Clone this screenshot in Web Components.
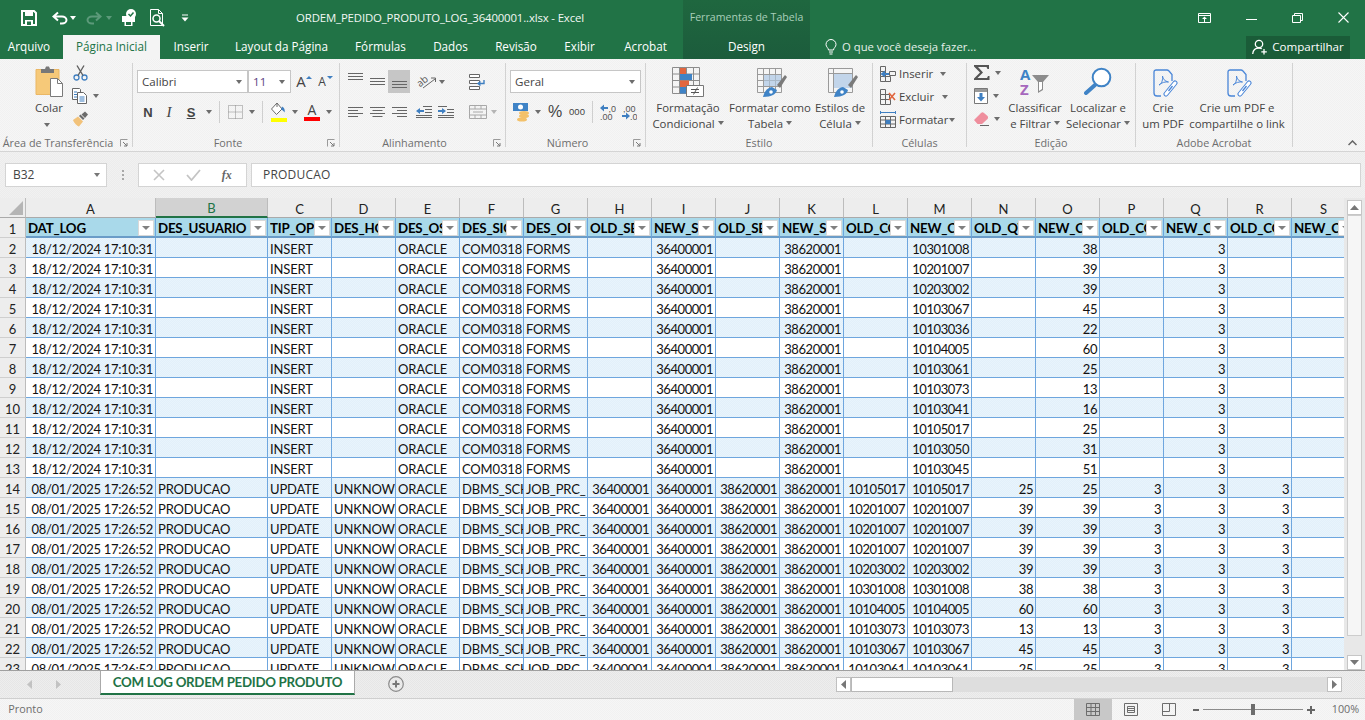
<!DOCTYPE html>
<html lang="pt-BR">
<head>
<meta charset="utf-8">
<title>ORDEM_PEDIDO_PRODUTO_LOG_36400001..xlsx - Excel</title>
<style>
html, body { margin: 0; padding: 0; height: 720px; width: 1365px; overflow: hidden; background: #eee; }
body { display: flex; flex-direction: column; font-family: "Open Sans", sans-serif; }
</style>
</head>
<body>
<xl-header></xl-header>
<xl-ribbon></xl-ribbon>
<xl-formula></xl-formula>
<xl-sheet></xl-sheet>
<xl-tabs></xl-tabs>
<xl-status></xl-status>

<script>
const UI = '"Open Sans", sans-serif';
const GRAY = '#6d6d6d';
const BLUE = '#3f7fc1';

// name: [width, height, svg body]
const ICONS = {
  save: [16, 16, `<path d="M1 1h12l2 2v12H1z" fill="none" stroke="#fff" stroke-width="2"/><path d="M4 1h8v5H4z" fill="#fff"/><path d="M4 10h8v5H4z" fill="#fff"/><path d="M6 11.5h4v3.5H6z" fill="#217346"/>`],
  undo: [17, 14, `<path d="M7 1.5 2.5 5.5 7 9.5M3 5.5h8c2.5 0 4.5 1.500 4.500 3.500S13.5 12.500 11 12.500H9" fill="none" stroke="#fff" stroke-width="2"/>`],
  redo: [17, 14, `<path d="M10 1.500l4.500 4-4.500 4M14 5.500H6C3.500 5.500 1.500 7 1.500 9s2 3.500 4.500 3.500h2" fill="none" stroke="#5c9a7a" stroke-width="2"/>`],
  touch: [17, 18, `<path d="M2 7h13v6h-2.500v4h-8v-4H2z" fill="#fff"/><path d="M6 13h5v3H6z" fill="#217346"/><circle cx="11" cy="5" r="5" fill="#fff"/><path d="M8.500 5l2 2 3-3.500" fill="none" stroke="#217346" stroke-width="1.500"/>`],
  preview: [15, 18, `<path d="M.5.500h8l4 4v12H.500z" fill="none" stroke="#fff"/><path d="M8.500.500v4h4" fill="none" stroke="#fff"/><circle cx="6.500" cy="9.500" r="3.500" fill="none" stroke="#fff" stroke-width="1.500"/><path d="M9 12l5 5" stroke="#fff" stroke-width="2"/>`],
  custom: [8, 8, `<path d="M1 1h6" stroke="#fff"/><path d="M.5 3.500h7L4 7.500z" fill="#fff"/>`],
  display: [13, 10, `<path d="M.5.500h12v9H.500z M.5 2.500h12" fill="none" stroke="#fff"/><path d="M6.500 3.500 4 6h2v3h1V6h2z" fill="#fff"/>`],
  minimize: [11, 1, `<path d="M0 .5h11" stroke="#fff"/>`],
  restore: [11, 10, `<path d="M.5 2.500h8v7h-8z M2.500 2.500v-2h8v7h-2" fill="none" stroke="#fff"/>`],
  close: [11, 11, `<path d="M.5.500l10 10M10.500.500l-10 10" stroke="#fff" stroke-width="1.100"/>`],
  person: [16, 16, `<circle cx="7" cy="5" r="3.700" fill="none" stroke="#fff" stroke-width="1.300"/><path d="M.7 15c.3-3.500 2.500-6 6.300-6 1.200 0 2 .3 2.800.7" fill="none" stroke="#fff" stroke-width="1.300"/><path d="M12 10v5.500M9.300 12.800h5.500" stroke="#fff" stroke-width="1.300"/>`],
  bulb: [12, 16, `<path d="M3.500 11c0-2-2.500-3-2.500-5.500a5 5 0 0 1 10 0C11 8 8.500 9 8.500 11z" fill="none" stroke="#fff"/><path d="M4 13h4M4.500 15h3" stroke="#fff"/>`],
  paste: [30, 32, `<path d="M1 3.500h23v25H1z" fill="#f6c979" stroke="#eab765"/><path d="M6 3h4l1-2.500h3L15 3h4v4H6z" fill="#787878"/><path d="M15.500 12.500h7l5 5v13h-12z" fill="#fff" stroke="#7a7a7a"/><path d="M22.500 12.500v5h5" fill="none" stroke="#7a7a7a"/>`],
  scissors: [15, 16, `<circle cx="3.500" cy="12.500" r="2.500" fill="none" stroke="${BLUE}" stroke-width="1.300"/><circle cx="11.500" cy="12.500" r="2.500" fill="none" stroke="${BLUE}" stroke-width="1.300"/><path d="M5 10.500 11 .5M10 10.500 4 .5" stroke="#606060" stroke-width="1.400"/>`],
  copy: [16, 16, `<path d="M.5.500h7l1 1v10h-8z" fill="#fff" stroke="#666"/><path d="M5.500 4.500h6l3 3v8h-9z" fill="#fff" stroke="#666"/><path d="M2 4h3M2 6.500h3M2 9h3M7.500 9h5M7.500 11h5M7.500 13h5" stroke="${BLUE}"/>`],
  brush: [17, 16, `<path d="M1 9l5-3.500 5 5L7 15.500C5 15 2 12 1 9z" fill="#f2c27a"/><path d="M7 5l1.500-1.500 4 4L11 9z" fill="#6b6b6b"/><path d="M9.500 3.500 13 .5l3 3-3 3.500z" fill="#6b6b6b"/>`],
  borders: [15, 14, `<path d="M.5.500h14v13H.500z M7.500.5v13 M.5 7h14" fill="none" stroke="#8a8a8a" stroke-dasharray="1 1"/>`],
  fill: [17, 21, `<path d="M7 1 1.500 7l5 5.500L12 7z" fill="#fff" stroke="#6a6a6a"/><path d="M7 1V5" stroke="#6a6a6a"/><path d="M12 4.500c3 1.500 3 4.500 2.500 6-.8-1.500-1.800-2.500-3.500-3z" fill="${BLUE}"/><path d="M1 16h16v4H1z" fill="#ff0"/>`],
  align_t: [15, 8, `<path d="M0 .5h15M0 3.500h15M0 6.500h15" stroke="#666"/>`],
  align_m: [15, 8, `<path d="M0 .5h15M0 3.500h15M0 6.500h15" stroke="#666"/>`],
  align_b: [15, 8, `<path d="M0 .5h15M0 3.500h15M0 6.500h15" stroke="#666"/>`],
  orient: [20, 15, `<text x="1" y="11" font-family="Open Sans" font-size="10" fill="#555" transform="rotate(-40 6 8)">ab</text><path d="M7 14 19 5M15 4h4.500v4" fill="none" stroke="#666"/>`],
  left: [15, 11, `<path d="M0 .5h15M0 3.500h10M0 6.500h15M0 9.500h10" stroke="#666"/>`],
  center: [15, 11, `<path d="M0 .5h15M2.500 3.500h10M0 6.500h15M2.500 9.500h10" stroke="#666"/>`],
  right: [15, 11, `<path d="M0 .5h15M5 3.500h10M0 6.500h15M5 9.500h10" stroke="#666"/>`],
  indent_d: [16, 12, `<path d="M7 .5h9M9 3.500h7M9 6.500h7M0 9.500h16M0 11.500h16" stroke="#666"/><path d="M0 5l4-3v2h4v2H4v2z" fill="${BLUE}"/>`],
  indent_i: [16, 12, `<path d="M0 .5h9M9 3.500h7M9 6.500h7M0 9.500h16M0 11.500h16" stroke="#666"/><path d="M8 5 4 2v2H0v2h4v2z" fill="${BLUE}"/>`],
  wrap: [16, 16, `<path d="M.5.500h10v3h-10zM.5 6.500h10v3h-10zM.5 12.500h10v3h-10z" fill="#fff" stroke="#666"/><path d="M15 6v3.500H9M11.500 7.500 9 9.500l2.500 2" fill="none" stroke="${BLUE}" stroke-width="1.400"/>`],
  merge: [18, 14, `<path d="M.5.500h17v13H.500zM.5 4h17M.5 10h17M6 .5V4M12 .5V4M6 10v3.500M12 10v3.500" fill="none" stroke="#a8a8a8"/><path d="M4 7h10" stroke="#a8a8a8"/>`],
  currency: [18, 20, `<path d="M0 1h15v8H0z" fill="#3f83c6"/><circle cx="7.500" cy="5" r="2.500" fill="#fff"/><ellipse cx="11" cy="11" rx="5" ry="2" fill="#f3c16a"/><ellipse cx="11" cy="14" rx="5" ry="2" fill="#f3c16a"/><ellipse cx="9" cy="17.500" rx="5" ry="2" fill="#f3c16a"/>`],
  dec_i: [16, 16, `<path d="M0 4l4-3.500V3h4v2H4v2.500z" fill="${BLUE}"/><text x="8.500" y="7.500" font-family="Liberation Sans" font-size="9" fill="#555">,0</text><text x="0" y="16" font-family="Liberation Sans" font-size="9" fill="#555">,00</text>`],
  dec_d: [15, 16, `<text x="1" y="7.500" font-family="Liberation Sans" font-size="9" fill="#555">,00</text><path d="M8 12 4 8.500V11H0v2h4v2.500z" fill="${BLUE}"/><text x="8" y="16" font-family="Liberation Sans" font-size="9" fill="#555">,0</text>`],
  cond: [32, 30, `<path d="M.5.500h27v26H.500zM7.500.5v26M14.500.5v26M21.500.5v26M.5 7h27M.5 13.500h27M.5 20h27" fill="none" stroke="#8c8c8c"/><path d="M8 1h6v6H8z" fill="#e1663f"/><path d="M8 7h12v6H8z" fill="#3f83c6"/><path d="M8 13.500h9V20H8z" fill="#e1663f"/><path d="M8 20h6v6.500H8z" fill="#3f83c6"/><path d="M14.500 18.500h17v11h-17z" fill="#fff" stroke="#777"/><path d="M19 22.500h8M19 25.500h8M25.500 20.500l-4 7" stroke="#555"/>`],
  tablefmt: [30, 30, `<path d="M.5.500h24v24H.500zM6.500.5v24M12.500.5v24M18.500.5v24M.5 6.500h24M.5 12.500h24M.5 18.500h24" fill="#f5f5f5" stroke="#9a9a9a"/><path d="M7 7h17v11H7z" fill="#c2d5ea"/><path d="M7 12.500h17M12.500 7v11M18.500 7v11" stroke="#a8b8c8"/><path d="M20 17 28 7l2 2-7 11z" fill="#7a7a7a"/><path d="M6 29c1-4 3-9 9-10l5 3c-1 4-5 7-14 7z" fill="#3f83c6"/><circle cx="14" cy="24" r="1.800" fill="#fff"/>`],
  cellfmt: [30, 30, `<path d="M.5.500h24v24H.500z M.5 5.500h24M5.500.5v24" fill="#f5f5f5" stroke="#9a9a9a"/><path d="M6 6h18v14H6z" fill="#c2d5ea"/><path d="M20 17 28 7l2 2-7 11z" fill="#7a7a7a"/><path d="M6 29c1-4 3-9 9-10l5 3c-1 4-5 7-14 7z" fill="#3f83c6"/><circle cx="14" cy="24" r="1.800" fill="#fff"/>`],
  ins: [16, 16, `<path d="M.5 .5h5v5h-5zM.5 10.500h5v5h-5zM5.500 10.500h5v5h-5zM.5 5.500h5v5h-5zM9.500 5.500h6v4h-6z" fill="none" stroke="#666"/><path d="M.5 8 5 4.500V7h4v2H5v2.500z" fill="${BLUE}"/>`],
  del: [16, 16, `<path d="M.5 .5h5v5h-5zM.5 10.500h5v5h-5zM5.500 10.500h5v5h-5zM.5 5.500h5v5h-5zM5.500 5.500h4v5h-4z" fill="none" stroke="#666"/><path d="M9 4l6 7M15 4l-6 7" stroke="#e1663f" stroke-width="1.600"/>`],
  fmt: [16, 17, `<path d="M.5 1.500h15M.5 0v3M15.500 0v3" stroke="${BLUE}"/><path d="M.5 5.500h15v11H.500zM5.500 5.500v11M10.500 5.500v11M.5 9h15M.5 13h15" fill="none" stroke="#666"/><path d="M5.500 9h5v4h-5z" fill="${BLUE}"/>`],
  sigma: [16, 15, `<path d="M0 0h15v4h-1.500l-1-2H4l5 5.500L3.500 13H13l1-2h1.500v4H0v-1.500L6 7.500 0 1.500z" fill="#555"/>`],
  filldown: [14, 16, `<path d="M.5.500h13v15H.500z" fill="#fff" stroke="#777"/><path d="M1 1h12v3H1z" fill="#999"/><path d="M5.500 5h3v4h2.500L7 13.500 3 9h2.500z" fill="${BLUE}"/>`],
  eraser: [15, 14, `<path d="M0 8 7 1c1-1 2-1 3 0l3.500 3c.8.800.8 2 0 3L8 12H3.500z" fill="#ef8e9d"/><path d="M6 13.500h9" stroke="#666"/>`],
  sort: [30, 28, `<text x="0" y="13" font-family="Open Sans" font-weight="700" font-size="15" fill="#3f83c6">A</text><text x="0" y="27.500" font-family="Open Sans" font-weight="700" font-size="15" fill="#a667bd">Z</text><path d="M12 8h17l-6 7v8l-5 3V15z" fill="#8c8c8c"/><path d="M19 15h3v7l-3 2z" fill="#fff"/>`],
  find: [28, 28, `<circle cx="17.500" cy="10.500" r="8.800" fill="#fff" stroke="#3f83c6" stroke-width="2"/><path d="M11 18 2 26" stroke="#3f83c6" stroke-width="4" stroke-linecap="round"/>`],
  pdf: [26, 28, `<path d="M8 27H4c-1.700 0-3-1-3-3V3c0-1.500 1-2 2-2h11c1 0 1.500.5 2 1l3 3.500V12" fill="none" stroke="#4a86d8" stroke-width="1.300"/><path d="M6 16c3-1 4-6 3.500-9 .5 3 2 5 6 6-3-.5-7 .5-9.500 3z" fill="none" stroke="#4a86d8"/><path d="M13 25l9-11" stroke="#4a86d8" stroke-width="5" stroke-linecap="round"/><path d="M13 25l9-11" stroke="#fff" stroke-width="3" stroke-linecap="round"/><path d="M15.500 22l4-5" stroke="#4a86d8" stroke-width="1.300"/>`],
  launcher: [8, 8, `<path d="M.5.500h7v7" fill="none" stroke="#9a9a9a" transform="rotate(-90 4 4)"/><path d="M3 3l4 4M7 4v3H4" fill="none" stroke="#777"/>`],
  x: [12, 12, `<path d="M1 1l10 10M11 1 1 11" stroke="#c4c4c4" stroke-width="1.600"/>`],
  check: [15, 12, `<path d="M1 6l4.500 5L14 1" fill="none" stroke="#c4c4c4" stroke-width="1.800"/>`],
  plus: [16, 16, `<circle cx="8" cy="8" r="7.300" fill="none" stroke="#8a8a8a" stroke-width="1.200"/><path d="M4.500 8h7M8 4.500v7" stroke="#777" stroke-width="2"/>`],
  v_normal: [14, 13, `<path d="M.5.500h13v12H.500zM5 .5v12M9.500.5v12M.5 4.500h13M.5 8.500h13" fill="none" stroke="#6d6d6d"/>`],
  v_layout: [14, 13, `<path d="M.5.500h13v12H.500z" fill="none" stroke="#6d6d6d"/><path d="M3.500 3.500h7v6h-7z M3.500 5.500h7M3.500 7.500h7" fill="none" stroke="#6d6d6d"/>`],
  v_break: [14, 13, `<path d="M.5.500h13v12H.500zM.5 8.500h7V.5" fill="none" stroke="#6d6d6d"/>`]
};

class XlIcon extends HTMLElement {
  connectedCallback() {
    const [w, h, body] = ICONS[this.getAttribute('name')];
    this.attachShadow({ mode: 'open' });
    this.shadowRoot.innerHTML = `<style>:host{display:block;line-height:0;flex:none}</style>
      <svg width="${w}" height="${h}" viewBox="0 0 ${w} ${h}">${body}</svg>`;
  }
}
customElements.define('xl-icon', XlIcon);

const ic = n => `<xl-icon name="${n}"></xl-icon>`;

// lay items out in flow: [from, to, html] gives a box of that width after a gap
function seq(base, items) {
  let at = base, out = '';
  for (const [a, b, html, extra, cls] of items) {
    out += `<div class="cell ${cls || ''}" style="margin-left:${a - at}px;width:${b - a}px;${extra || ''}">${html || ''}</div>`;
    at = b;
  }
  return out;
}

function caret(c) {
  return `<span style="display:block;width:0;height:0;border:3.5px solid transparent;border-top:4px solid ${c || GRAY};border-bottom:0"></span>`;
}

class XlHeader extends HTMLElement {
  connectedCallback() {
    this.attachShadow({ mode: 'open' });
    const tabs = [['Arquivo',58,5],['Página Inicial',97,0,'on'],['Inserir',62],['Layout da Página',119],['Fórmulas',79],['Dados',61],['Revisão',70],['Exibir',57],['Acrobat',75]];
    this.shadowRoot.innerHTML = `<style>
      :host{display:grid;grid-template-columns:683px 127px 1fr;grid-template-rows:35px 24px;background:#217346;color:#fff;font:12px/1 ${UI};flex:none}
      .cell{display:flex;align-items:center;justify-content:center;flex:none;height:100%}
      .row{display:flex;align-items:center;min-width:0}
      .title{white-space:nowrap;font-size:11.4px;letter-spacing:-.15px;color:#f2f7f4}
      .tab{display:flex;align-items:center;justify-content:center;height:24px;font-size:11.7px;flex:none;white-space:nowrap}
      .tab.on{background:#f4f4f4;color:#217346}
      .ctx{grid-column:2;grid-row:1/3;background:linear-gradient(#1f673f,#1c5c3c);display:flex;flex-direction:column;align-items:center}
      .ctx .a{height:35px;display:flex;align-items:center;font-size:10.6px;color:#a9cfba;white-space:nowrap}
      .ctx .b{height:24px;display:flex;align-items:center;font-size:11.7px}
      .tell{font-size:11.3px;white-space:nowrap;color:#e6f0ea}
      .share{background:#1a5c38;gap:4px;white-space:nowrap;font-size:11.6px;height:23px}
    </style>
    <div class="row">${seq(0, [[21,37,ic('save')],[51,68,ic('undo')],[69,77,caret('#fff')],[86,103,ic('redo')],[105,112,caret('#5c9a7a')],[120,137,ic('touch')],[150,165,ic('preview')],[181,189,ic('custom')],[295,585,'<span class="title">ORDEM_PEDIDO_PRODUTO_LOG_36400001..xlsx - Excel</span>']])}</div>
    <div class="row" style="grid-column:1;grid-row:2">${tabs.map(t => `<div class="tab ${t[3] || ''}" style="width:${t[1]}px;margin-right:${t[2] || 0}px">${t[0]}</div>`).join('')}</div>
    <div class="ctx"><div class="a">Ferramentas de Tabela</div><div class="b">Design</div></div>
    <div class="row" style="grid-column:3;grid-row:1">${seq(810, [[1198,1211,ic('display')],[1246,1257,ic('minimize')],[1292,1303,ic('restore')],[1338,1349,ic('close')]])}</div>
    <div class="row" style="grid-column:3;grid-row:2">${seq(810, [[825,837,ic('bulb')],[842,976,'<span class="tell">O que você deseja fazer...</span>','justify-content:flex-start'],[1246,1350,ic('person') + '<span>Compartilhar</span>','','share']])}</div>`;
  }
}
customElements.define('xl-header', XlHeader);

class RbGroup extends HTMLElement {
  connectedCallback() {
    this.attachShadow({ mode: 'open' });
    const launcher = this.hasAttribute('launcher');
    this.shadowRoot.innerHTML = `<style>
      :host{display:flex;flex-direction:column;flex:none;height:84px;width:${this.getAttribute('w')}px;box-sizing:border-box;border-right:1px solid #d2d2d2}
      .body{height:70px;min-height:70px}
      .label{height:14px;margin-bottom:-4px;line-height:20px;font-size:10.8px;color:#6e6e6e;display:flex;justify-content:center;position:relative;white-space:nowrap;padding-right:${launcher ? 16 : 0}px}
      xl-icon{position:absolute;right:4px;top:6px}
    </style><div class="body"><slot></slot></div>
    <div class="label"><span>${this.getAttribute('label')}</span>${launcher ? ic('launcher') : ''}</div>`;
  }
}
customElements.define('rb-group', RbGroup);

class RbBig extends HTMLElement {
  connectedCallback() {
    this.attachShadow({ mode: 'open' });
    const lines = this.getAttribute('text').split('|');
    this.shadowRoot.innerHTML = `<style>
      :host{display:flex;flex-direction:column;align-items:center;flex:none;width:${this.getAttribute('w')}px;font-size:11.4px;color:#444;white-space:nowrap}
      .i{height:37px;display:flex;justify-content:center;align-items:flex-start;padding-top:${this.getAttribute('pt') || 4}px;padding-left:${this.getAttribute('pl') || 0}px;box-sizing:border-box}
      .t{height:15.500px;line-height:15.500px;display:flex;align-items:center;gap:3px;justify-content:center}
    </style><div class="i">${ic(this.getAttribute('icon'))}</div>
    ${lines.map((l, i) => `<div class="t">${l}${i === lines.length - 1 && !this.hasAttribute('nocaret') ? caret() : ''}</div>`).join('')}`;
  }
}
customElements.define('rb-big', RbBig);

class XlRibbon extends HTMLElement {
  connectedCallback() {
    this.attachShadow({ mode: 'open' });
    const c = caret();
    const combo = (txt, col) => `<span style="flex:1;padding-left:4px;color:${col || '#444'}">${txt}</span><span style="margin-right:5px">${c}</span>`;
    const sep = 'background:#cfcfcf;height:22px';
    this.shadowRoot.innerHTML = `<style>
      :host{display:flex;flex:none;height:93px;box-sizing:border-box;padding-top:4px;border-bottom:1px solid #d4d4d4;font:11.4px/1 ${UI};color:#444;
        background:repeating-conic-gradient(#f1f1f1 0 25%,#f6f6f6 0 50%) 0 0/2px 2px}
      .row{display:flex;align-items:center}
      .cell{display:flex;align-items:center;justify-content:center;flex:none;height:100%}
      .r1{height:23px;margin-top:7px}
      .r2{height:24px;margin-top:7px}
      .combo{background:#fff;border:1px solid #c6c6c6;box-sizing:border-box;justify-content:flex-start;font-size:11.6px}
      .cols{display:flex;height:100%}
      .sc{display:flex;flex-direction:column}
      .sr{display:flex;align-items:center;height:23px}
      .b{font-weight:700;font-size:13px;color:#444}
      .a1{font-size:15px;color:#444}
      .a2{font-size:12px;color:#444}
      .up{width:0;height:0;border:3.5px solid transparent;border-top:0;border-bottom:3.5px solid ${BLUE};align-self:flex-start;margin-top:6px}
      .dn{width:0;height:0;border:3.5px solid transparent;border-bottom:0;border-top:3.5px solid ${BLUE};align-self:flex-start;margin-top:6px}
      .fc{display:flex;flex-direction:column;align-items:center;font-size:14px;line-height:14px;color:#444}
      .bar{width:16px;height:4px;background:#f00}
      .pc{margin:-10px 0 0 44px}
      .collapse{margin:77px 0 0 55px}
    </style>
    <rb-group w="133" label="Área de Transferência" launcher>
      <div class="cols">
        <rb-big w="36" icon="paste" text="Colar" nocaret pt="3" pl="2" style="margin-left:31px"></rb-big>
        <div class="sc" style="margin-left:5px;margin-top:-2px">
          ${[['scissors'],['copy',c],['brush']].map(r => `<div class="sr"><div style="width:16px;display:flex;justify-content:center">${ic(r[0])}</div>${r[1] ? `<div style="margin-left:5px">${r[1]}</div>` : ''}</div>`).join('')}
        </div>
      </div>
      <div class="pc">${c}</div>
    </rb-group>

    <rb-group w="207" label="Fonte" launcher>
      <div class="row r1">${seq(133, [[137,248,combo('Calibri'),'','combo'],[248,291,combo('11','#5b3f82'),'','combo'],[296,306,'<span class="a1">A</span>'],[306,312,'<span class="up"></span>'],[318,326,'<span class="a2">A</span>'],[326,333,'<span class="dn"></span>']])}</div>
      <div class="row r2">${seq(133, [[140,156,'<span class="b" style="font-family:Liberation Sans">N</span>'],[161,177,'<span class="b" style="font-family:Liberation Serif;font-style:italic;font-weight:400;font-size:15px">I</span>'],[183,199,'<span class="b" style="text-decoration:underline;font-family:Liberation Sans">S</span>'],[205,212,c],[219,220,'',sep],[228,243,ic('borders')],[248,255,c],[262,263,'',sep],[270,287,ic('fill')],[291,298,c],[304,320,'<div class="fc"><span>A</span><span class="bar"></span></div>'],[325,332,c]])}</div>
    </rb-group>

    <rb-group w="166" label="Alinhamento" launcher>
      <div class="row r1">${seq(340, [[348,363,ic('align_t'),'align-items:flex-start;padding-top:3px;box-sizing:border-box'],[370,385,ic('align_m')],[388,410,ic('align_b'),'background:#c6c6c6;align-items:flex-end;padding-bottom:4px;box-sizing:border-box'],[416,436,ic('orient')],[438,445,c],[469,485,ic('wrap')]])}</div>
      <div class="row r2">${seq(340, [[348,363,ic('left')],[370,385,ic('center')],[392,407,ic('right')],[416,432,ic('indent_d')],[438,454,ic('indent_i')],[469,487,ic('merge')],[490,497,caret('#b5b5b5')]])}</div>
    </rb-group>

    <rb-group w="140" label="Número" launcher>
      <div class="row r1">${seq(506, [[510,641,combo('Geral'),'','combo']])}</div>
      <div class="row r2">${seq(506, [[513,531,ic('currency')],[534,541,c],[547,563,'<span style="font-size:16px;font-family:Liberation Sans">%</span>'],[568,586,'<span style="font-size:9.500px;font-family:Liberation Sans">000</span>'],[592,593,'',sep],[600,616,ic('dec_i')],[622,637,ic('dec_d')]])}</div>
    </rb-group>

    <rb-group w="227" label="Estilo">
      <div class="cols">
        <rb-big w="80" icon="cond" text="Formatação|Condicional" pt="4" style="margin-left:2px"></rb-big>
        <rb-big w="84" icon="tablefmt" text="Formatar como|Tabela" pt="5" pl="4"></rb-big>
        <rb-big w="56" icon="cellfmt" text="Estilos de|Célula" pt="5" pl="6"></rb-big>
      </div>
    </rb-group>

    <rb-group w="94" label="Células">
      <div class="sc" style="margin-top:-1px">
        ${[['ins','Inserir',41],['del','Excluir',43],['fmt','Formatar',50]].map(r => `<div class="sr" style="padding-left:7px">${ic(r[0])}<span style="margin-left:3px;width:${r[2]}px">${r[1]}</span>${c}</div>`).join('')}
      </div>
    </rb-group>

    <rb-group w="169" label="Edição">
      <div class="cols">
        <div class="sc" style="margin-top:-2px;width:39px;padding-left:7px;box-sizing:border-box">
          ${['sigma','filldown','eraser'].map(n => `<div class="sr">${ic(n)}<div style="margin-left:5px">${c}</div></div>`).join('')}
        </div>
        <rb-big w="58" icon="sort" text="Classificar|e Filtrar" pt="4"></rb-big>
        <rb-big w="68" icon="find" text="Localizar e|Selecionar" pt="4"></rb-big>
      </div>
    </rb-group>

    <rb-group w="157" label="Adobe Acrobat">
      <div class="cols">
        <rb-big w="54" icon="pdf" text="Crie|um PDF" nocaret pt="6" pl="6"></rb-big>
        <rb-big w="94" icon="pdf" text="Crie um PDF e|compartilhe o link" nocaret pt="6" pl="6"></rb-big>
      </div>
    </rb-group>

    <svg class="collapse" viewBox="0 0 9 6" width="9" height="6"><path d="M.5 5 4.500 1l4 4" fill="none" stroke="#666" stroke-width="1.500"/></svg>`;
  }
}
customElements.define('xl-ribbon', XlRibbon);

class XlFormula extends HTMLElement {
  connectedCallback() {
    this.attachShadow({ mode: 'open' });
    this.shadowRoot.innerHTML = `<style>
      :host{display:flex;flex:none;height:46px;box-sizing:border-box;padding:11px 4px 0 5px;font:12px/1 ${UI};color:#444;
        background:repeating-conic-gradient(#ececec 0 25%,#f1f1f1 0 50%) 0 0/2px 2px}
      .box{background:#fff;border:1px solid #d4d4d4;box-sizing:border-box;height:24px;display:flex;align-items:center}
      .name{width:102px;padding:0 6px 0 7px;justify-content:space-between}
      .dots{width:31px;display:flex;flex-direction:column;align-items:center;justify-content:center;gap:2px;height:24px}
      .dots i{width:2px;height:2px;background:#a8a8a8;display:block}
      .fx{width:109px;justify-content:space-around;padding:0 4px;margin-right:4px}
      .fx span{font:italic 700 12px "Liberation Serif",serif;color:#666}
      .input{flex:1;padding-left:11px;letter-spacing:.2px}
    </style>
    <div class="box name"><span>B32</span>${caret('#777')}</div>
    <div class="dots"><i></i><i></i><i></i></div>
    <div class="box fx">${ic('x')}${ic('check')}<span>fx</span></div>
    <div class="box input">PRODUCAO</div>`;
  }
}
customElements.define('xl-formula', XlFormula);

const COLS = ['A','B','C','D','E','F','G','H','I','J','K','L','M','N','O','P','Q','R','S'];
const HEAD = ['DAT_LOG','DES_USUARIO','TIP_OP','DES_HO','DES_OS','DES_SIC','DES_OB','OLD_SE','NEW_S','OLD_SE','NEW_S','OLD_CO','NEW_C','OLD_QT','NEW_C','OLD_CO','NEW_C','OLD_CO','NEW_C'];
const WIDTHS = [130, 112].concat(Array(17).fill(64));
const INSERTS = [['10301008',38],['10201007',39],['10203002',39],['10103067',45],['10103036',22],['10104005',60],['10103061',25],['10103073',13],['10103041',16],['10105017',25],['10103050',31],['10103045',51]];
const UPDATES = [['10105017',25],['10201007',39],['10201007',39],['10201007',39],['10203002',39],['10301008',38],['10104005',60],['10103073',13],['10103067',45],['10103061',25]];

class XlSheet extends HTMLElement {
  connectedCallback() {
    this.attachShadow({ mode: 'open' });
    const kind = (v, i) => (i === 0 ? 'r d' : i >= 7 && v !== '' ? 'r' : '');
    const row = (n, vals) => `<div class="rh">${n}</div>` + vals.map((v, i) => `<div class="c ${kind(v, i)}">${v}</div>`).join('');
    let rows = '';
    let n = 2;
    for (const [code, qty] of INSERTS) {
      rows += row(n++, ['18/12/2024 17:10:31','','INSERT','','ORACLE','COM0318','FORMS','','36400001','','38620001','',code,'',qty,'',3,'','']);
    }
    for (const [code, qty] of UPDATES) {
      rows += row(n++, ['08/01/2025 17:26:52','PRODUCAO','UPDATE','UNKNOW','ORACLE','DBMS_SCH','JOB_PRC_','36400001','36400001','38620001','38620001',code,code,qty,qty,3,3,3,'']);
    }
    this.shadowRoot.innerHTML = `<style>
      :host{display:flex;flex:1;min-height:0;overflow:hidden;background:#e8e8e8;font:13px/1 Lato,sans-serif;color:#111}
      .wrap{width:1344px;flex:none;overflow:hidden}
      .grid{display:grid;grid-template-columns:26px ${WIDTHS.map(w => w + 'px').join(' ')};grid-auto-rows:20px;width:max-content;background:#fff;align-content:start}
      .corner,.ch,.rh{background:#ededed;box-sizing:border-box;display:flex;align-items:center;justify-content:center;color:#222;padding-top:3px}
      .corner{border-right:1px solid #bcbcbc;border-bottom:1px solid #aaa;justify-content:flex-end;align-items:flex-end;padding:0 2px 2px 0}
      .ch{border-right:1px solid #bcbcbc;border-bottom:1px solid #aaa}
      .ch.sel{background:#d2d2d2;color:#217346;border-bottom:2px solid #217346}
      .rh{border-right:1px solid #bcbcbc;border-bottom:1px solid #cfcfcf}
      .c{box-sizing:border-box;border-right:1px solid #6ea6de;border-bottom:1px solid #6ea6de;padding:3px 2px 0;display:flex;align-items:center;white-space:nowrap;overflow:hidden;background:#fff;letter-spacing:-.15px}
      .c.r{justify-content:flex-end;letter-spacing:-.45px}
      .c.d{letter-spacing:-.3px}
      .band{background:repeating-conic-gradient(#e2f0fa 0 25%,#e8f4fc 0 50%) 0 0/2px 2px}
      .h{background:#a9d9ea;font-weight:700;padding:0 1px 0 2px;border-bottom:2px solid #6a9cc8;justify-content:space-between;font-size:13.300px;color:#000;letter-spacing:-.2px}
      .h span{overflow:hidden;flex:1;min-width:0;padding-top:4px}
      .h b{flex:none;width:16px;height:16px;align-self:flex-end;background:#fff;border:1px solid #d8d8d8;box-sizing:border-box;display:flex;align-items:center;justify-content:center}
      .h b i{display:block;width:0;height:0;border:4px solid transparent;border-top:4px solid #808080;border-bottom:0}
      .vbar{flex:1;background:#e8e8e8;display:flex;flex-direction:column;align-items:center;padding-top:2px;box-sizing:border-box}
      .btn{width:15px;height:15px;background:#fff;border:1px solid #c6c6c6;box-sizing:border-box;display:flex;align-items:center;justify-content:center;flex:none}
      .thumb{width:15px;flex:1;background:#f6f6f6;border:1px solid #cdcdcd;box-sizing:border-box;margin-bottom:19px}
    </style>
    <div class="wrap"><div class="grid" id="g">
      <div class="corner"><svg width="14" height="14"><path d="M14 0v14H0z" fill="#b5b5b5"/></svg></div>
      ${COLS.map(l => `<div class="ch ${l === 'B' ? 'sel' : ''}">${l}</div>`).join('')}
      <div class="rh">1</div>
      ${HEAD.map(h => `<div class="c h"><span>${h}</span><b><i></i></b></div>`).join('')}
      ${rows}
    </div></div>
    <div class="vbar">
      <div class="btn"><svg width="9" height="5"><path d="M4.500 0 9 5H0z" fill="#777"/></svg></div>
      <div class="thumb"></div>
      <div class="btn"><svg width="9" height="5"><path d="M4.500 5 9 0H0z" fill="#777"/></svg></div>
    </div>`;
    // every second data row gets the table band colour
    const kids = [...this.shadowRoot.getElementById('g').children];
    const perRow = COLS.length + 1;
    kids.forEach((k, i) => {
      const rowIdx = Math.floor(i / perRow);
      if (rowIdx >= 2 && rowIdx % 2 === 0 && k.classList.contains('c')) k.classList.add('band');
    });
  }
}
customElements.define('xl-sheet', XlSheet);

class XlTabs extends HTMLElement {
  connectedCallback() {
    this.attachShadow({ mode: 'open' });
    this.shadowRoot.innerHTML = `<style>
      :host{display:flex;align-items:flex-start;flex:none;height:28px;box-sizing:border-box;border-top:1px solid #a0a0a0;position:relative;
        background:repeating-conic-gradient(#e6e6e6 0 25%,#eeeeee 0 50%) 0 0/2px 2px}
      .cell{display:flex;align-items:center;justify-content:center;flex:none;height:100%}
      .rowx{display:flex;align-items:center;height:26px}
      .tab{background:#fff;border:1px solid #aaa;border-top:0;border-bottom:2px solid #217346;box-sizing:border-box;height:24px;align-self:flex-start;font:700 13.300px Lato,sans-serif;letter-spacing:-.3px;color:#217346;white-space:nowrap}
      .sbtn{width:15px;height:15px;background:#fff;border:1px solid #c0c0c0;box-sizing:border-box;display:flex;align-items:center;justify-content:center}
    </style>
    <div class="rowx">${seq(0, [
      [24,34,'<svg width="5" height="9"><path d="M5 0v9L0 4.500z" fill="#c2c2c2"/></svg>'],
      [53,63,'<svg width="5" height="9"><path d="M0 0v9l5-4.500z" fill="#c2c2c2"/></svg>'],
      [100,355,'<span>COM LOG ORDEM PEDIDO PRODUTO</span>','','tab'],
      [388,404,ic('plus')],
      [836,851,'<div class="sbtn"><svg width="5" height="9"><path d="M5 0v9L0 4.500z" fill="#777"/></svg></div>'],
      [851,953,'','background:#fff;border:1px solid #b8b8b8;box-sizing:border-box;height:15px'],
      [953,1327,'','background:#dedede;height:15px'],
      [1327,1342,'<div class="sbtn"><svg width="5" height="9"><path d="M0 0v9l5-4.500z" fill="#777"/></svg></div>']
    ])}</div>`;
  }
}
customElements.define('xl-tabs', XlTabs);

class XlStatus extends HTMLElement {
  connectedCallback() {
    this.attachShadow({ mode: 'open' });
    this.shadowRoot.innerHTML = `<style>
      :host{display:flex;align-items:stretch;flex:none;height:22px;box-sizing:border-box;border-top:1px solid #cfcfcf;font:10.800px/1 ${UI};color:#6d6d6d;
        background:repeating-conic-gradient(#f1f1f1 0 25%,#f6f6f6 0 50%) 0 0/2px 2px}
      .cell{display:flex;align-items:center;justify-content:center;flex:none;height:100%}
    </style>
    ${seq(0, [
      [8,43,'<span>Pronto</span>'],
      [1074,1112,ic('v_normal'),'background:#c8c8c8'],
      [1124,1138,ic('v_layout')],
      [1162,1176,ic('v_break')],
      [1193,1199,'<span style="width:6px;height:2px;background:#666"></span>'],
      [1203,1303,'<span style="width:100px;height:1px;background:#8c8c8c;display:block"></span><span style="width:4px;height:11px;background:#6d6d6d;margin-left:-52px;margin-right:48px"></span>'],
      [1307,1315,'<svg width="8" height="8"><path d="M0 4h8M4 0v8" stroke="#666" stroke-width="2"/></svg>'],
      [1331,1360,'<span>100%</span>']
    ])}`;
  }
}
customElements.define('xl-status', XlStatus);
</script>
</body>
</html>
